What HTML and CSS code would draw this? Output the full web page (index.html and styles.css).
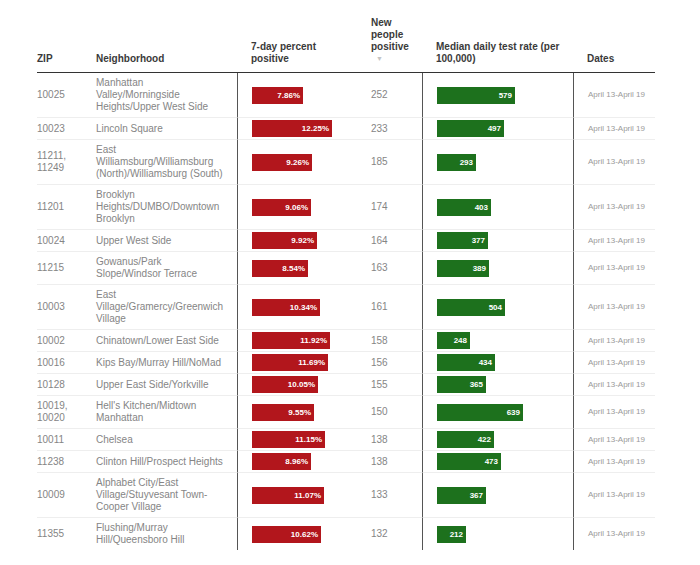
FILE: index.html
```html
<!DOCTYPE html>
<html lang="en">
<head>
<meta charset="utf-8">
<title>Neighborhood test positivity</title>
<link rel="stylesheet" href="styles.css">
</head>
<body>
<table class="covid">
  <colgroup>
    <col class="c-zip"><col class="c-hood"><col class="c-pct"><col class="c-new"><col class="c-rate"><col class="c-dates">
  </colgroup>
  <thead>
    <tr>
      <th class="zip">ZIP</th>
      <th class="hood">Neighborhood</th>
      <th class="pct">7-day percent positive</th>
      <th class="new">New people positive<span class="sort">▼</span></th>
      <th class="rate">Median daily test rate (per 100,000)</th>
      <th class="dates">Dates</th>
    </tr>
  </thead>
  <tbody>
    <tr><td class="zip">10025</td><td class="hood">Manhattan Valley/Morningside Heights/Upper West Side</td><td class="pct"><div class="bar red" style="width:51px">7.86%</div></td><td class="new">252</td><td class="rate"><div class="bar green" style="width:78px">579</div></td><td class="dates">April 13-April 19</td></tr>
    <tr><td class="zip">10023</td><td class="hood">Lincoln Square</td><td class="pct"><div class="bar red" style="width:80px">12.25%</div></td><td class="new">233</td><td class="rate"><div class="bar green" style="width:67px">497</div></td><td class="dates">April 13-April 19</td></tr>
    <tr><td class="zip">11211, 11249</td><td class="hood">East Williamsburg/Williamsburg (North)/Williamsburg (South)</td><td class="pct"><div class="bar red" style="width:60px">9.26%</div></td><td class="new">185</td><td class="rate"><div class="bar green" style="width:39px">293</div></td><td class="dates">April 13-April 19</td></tr>
    <tr><td class="zip">11201</td><td class="hood">Brooklyn Heights/DUMBO/Downtown Brooklyn</td><td class="pct"><div class="bar red" style="width:59px">9.06%</div></td><td class="new">174</td><td class="rate"><div class="bar green" style="width:54px">403</div></td><td class="dates">April 13-April 19</td></tr>
    <tr><td class="zip">10024</td><td class="hood">Upper West Side</td><td class="pct"><div class="bar red" style="width:65px">9.92%</div></td><td class="new">164</td><td class="rate"><div class="bar green" style="width:51px">377</div></td><td class="dates">April 13-April 19</td></tr>
    <tr><td class="zip">11215</td><td class="hood">Gowanus/Park Slope/Windsor Terrace</td><td class="pct"><div class="bar red" style="width:56px">8.54%</div></td><td class="new">163</td><td class="rate"><div class="bar green" style="width:52px">389</div></td><td class="dates">April 13-April 19</td></tr>
    <tr><td class="zip">10003</td><td class="hood">East Village/Gramercy/Greenwich Village</td><td class="pct"><div class="bar red" style="width:68px">10.34%</div></td><td class="new">161</td><td class="rate"><div class="bar green" style="width:68px">504</div></td><td class="dates">April 13-April 19</td></tr>
    <tr><td class="zip">10002</td><td class="hood">Chinatown/Lower East Side</td><td class="pct"><div class="bar red" style="width:78px">11.92%</div></td><td class="new">158</td><td class="rate"><div class="bar green" style="width:33px">248</div></td><td class="dates">April 13-April 19</td></tr>
    <tr><td class="zip">10016</td><td class="hood">Kips Bay/Murray Hill/NoMad</td><td class="pct"><div class="bar red" style="width:76px">11.69%</div></td><td class="new">156</td><td class="rate"><div class="bar green" style="width:58px">434</div></td><td class="dates">April 13-April 19</td></tr>
    <tr><td class="zip">10128</td><td class="hood">Upper East Side/Yorkville</td><td class="pct"><div class="bar red" style="width:66px">10.05%</div></td><td class="new">155</td><td class="rate"><div class="bar green" style="width:49px">365</div></td><td class="dates">April 13-April 19</td></tr>
    <tr><td class="zip">10019, 10020</td><td class="hood">Hell's Kitchen/Midtown Manhattan</td><td class="pct"><div class="bar red" style="width:62px">9.55%</div></td><td class="new">150</td><td class="rate"><div class="bar green" style="width:86px">639</div></td><td class="dates">April 13-April 19</td></tr>
    <tr><td class="zip">10011</td><td class="hood">Chelsea</td><td class="pct"><div class="bar red" style="width:73px">11.15%</div></td><td class="new">138</td><td class="rate"><div class="bar green" style="width:57px">422</div></td><td class="dates">April 13-April 19</td></tr>
    <tr><td class="zip">11238</td><td class="hood">Clinton Hill/Prospect Heights</td><td class="pct"><div class="bar red" style="width:59px">8.96%</div></td><td class="new">138</td><td class="rate"><div class="bar green" style="width:64px">473</div></td><td class="dates">April 13-April 19</td></tr>
    <tr><td class="zip">10009</td><td class="hood">Alphabet City/East Village/Stuyvesant Town-Cooper Village</td><td class="pct"><div class="bar red" style="width:72px">11.07%</div></td><td class="new">133</td><td class="rate"><div class="bar green" style="width:49px">367</div></td><td class="dates">April 13-April 19</td></tr>
    <tr><td class="zip">11355</td><td class="hood">Flushing/Murray Hill/Queensboro Hill</td><td class="pct"><div class="bar red" style="width:69px">10.62%</div></td><td class="new">132</td><td class="rate"><div class="bar green" style="width:29px">212</div></td><td class="dates">April 13-April 19</td></tr>
  </tbody>
</table>
</body>
</html>
```

FILE: styles.css
```css
html, body {
  margin: 0;
  padding: 0;
  background: #ffffff;
}

body {
  font-family: "Liberation Sans", Arial, sans-serif;
}

.covid {
  margin: 17px 0 0 37px;
  width: 618px;
  table-layout: fixed;
  border-collapse: separate;
  border-spacing: 0;
  font-size: 10px;
  line-height: 12px;
  color: #858585;
}

.c-zip { width: 45px; }
.c-hood { width: 155px; }
.c-pct { width: 120px; }
.c-new { width: 65px; }
.c-rate { width: 151px; }
.c-dates { width: 82px; }

.covid th {
  text-align: left;
  vertical-align: bottom;
  font-weight: bold;
  color: #3a3a3a;
  padding: 0 10px 7px 14px;
  border-bottom: 1px solid #333333;
}

.covid th.zip { padding-left: 0; }

.sort {
  display: block;
  padding-left: 5px;
  font-size: 7px;
  color: #c4c4c4;
  font-weight: normal;
}

.covid td {
  vertical-align: middle;
  padding: 4px 8px 4px 14px;
  border-bottom: 1px solid #eeeeee;
}

.covid td.zip { padding-left: 0; }
.covid td.hood { padding-right: 10px; }

.covid td.pct,
.covid td.rate {
  padding-top: 2px;
  padding-bottom: 2px;
}

.covid td.pct,
.covid td.rate,
.covid td.dates {
  border-left: 1px solid #555555;
  padding-left: 14px;
}

.covid td.dates {
  font-size: 8px;
  color: #9a9a9a;
  white-space: nowrap;
}

.covid tbody tr:last-child td {
  border-bottom: none;
}

.bar {
  height: 17px;
  line-height: 17px;
  box-sizing: border-box;
  padding-right: 3px;
  text-align: right;
  font-size: 8px;
  font-weight: bold;
  color: #ffffff;
}

.bar.red { background: #b2161c; }
.bar.green { background: #1d711d; }
```
